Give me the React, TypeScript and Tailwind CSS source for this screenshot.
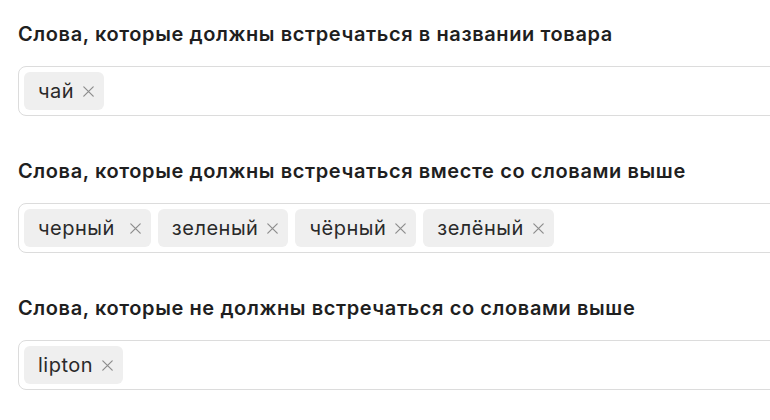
import React from "react";

type Tag = { label: string; wide?: boolean };

const sections: { title: string; tags: Tag[] }[] = [
  { title: "Слова, которые должны встречаться в названии товара", tags: [{ label: "чай" }] },
  {
    title: "Слова, которые должны встречаться вместе со словами выше",
    tags: [{ label: "черный", wide: true }, { label: "зеленый" }, { label: "чёрный" }, { label: "зелёный" }],
  },
  { title: "Слова, которые не должны встречаться со словами выше", tags: [{ label: "lipton" }] },
];

function CloseIcon() {
  return (
    <svg width="11" height="11" viewBox="0 0 11 11" fill="none" className="shrink-0">
      <path d="M0.8 0.8L10.2 10.2M10.2 0.8L0.8 10.2" stroke="#8c8c8c" strokeWidth="1.2" strokeLinecap="round" />
    </svg>
  );
}

export default function App() {
  return (
    <div className="w-[770px] h-[420px] overflow-hidden bg-white pl-[18px] pt-[22px] font-[Inter,'Noto_Sans',sans-serif]">
      {sections.map((s) => (
        <div key={s.title} className="mb-[43px]">
          <h2 className="text-[20px] leading-[24px] font-semibold tracking-[0.6px] text-[#1f1f1f] whitespace-nowrap">
            {s.title}
          </h2>
          <div className="mt-[20px] w-[800px] h-[50px] border border-[#dcdcdc] rounded-[8px] p-[5px] flex gap-[7px]">
            {s.tags.map((t) => (
              <div
                key={t.label}
                className="h-[38px] bg-[#efefef] rounded-[6px] pl-[14px] pr-[10px] flex items-center text-[20px] tracking-[0.5px] text-[#2a2a2a]"
              >
                <span>{t.label}</span>
                <span className={t.wide ? "ml-[15px] flex" : "ml-[9px] flex"}>
                  <CloseIcon />
                </span>
              </div>
            ))}
          </div>
        </div>
      ))}
    </div>
  );
}
